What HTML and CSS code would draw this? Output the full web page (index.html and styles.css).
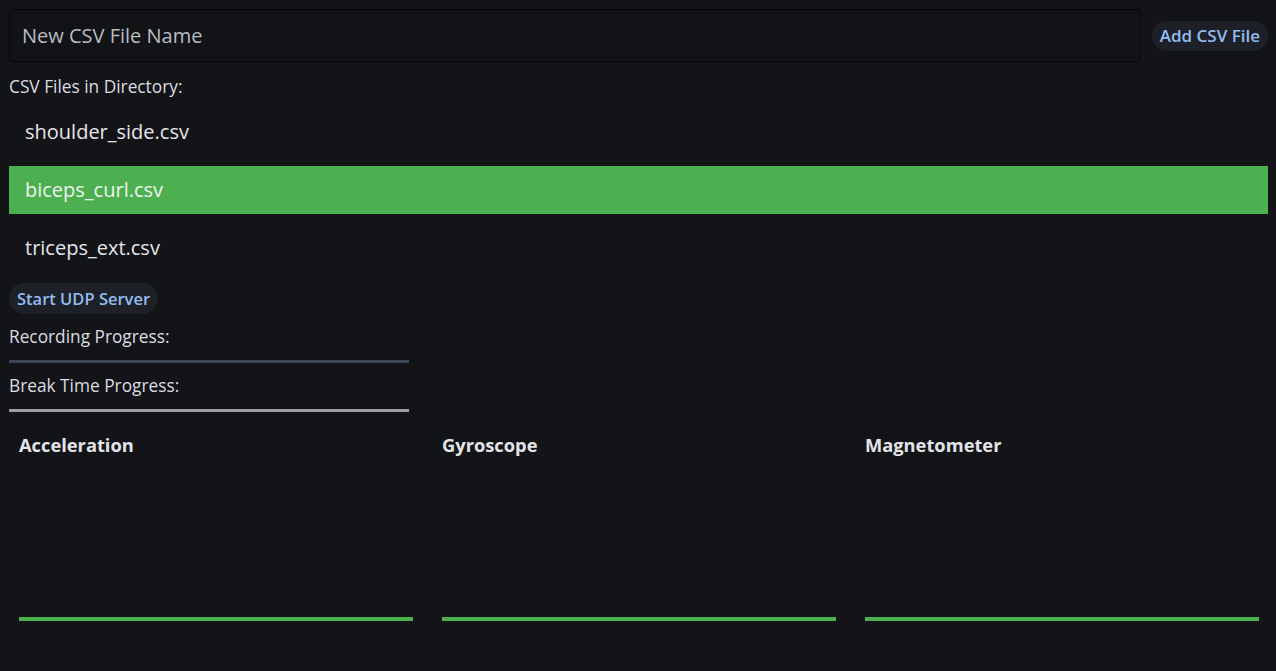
FILE: index.html
```html
<!DOCTYPE html>
<html>
<head>
<meta charset="utf-8">
<link rel="stylesheet" href="styles.css">
</head>
<body>
<div class="app">
  <div class="top-row">
    <div class="name-input">New CSV File Name</div>
    <button class="pill-btn">Add CSV File</button>
  </div>
  <div class="label dir-label">CSV Files in Directory:</div>
  <ul class="file-list">
    <li class="file-item">shoulder_side.csv</li>
    <li class="file-item selected">biceps_curl.csv</li>
    <li class="file-item">triceps_ext.csv</li>
  </ul>
  <div class="btn-row">
    <button class="pill-btn small">Start UDP Server</button>
  </div>
  <div class="label prog-label">Recording Progress:</div>
  <div class="bar rec-bar"></div>
  <div class="label prog-label">Break Time Progress:</div>
  <div class="bar break-bar"></div>
  <div class="charts">
    <div class="chart">
      <div class="chart-title">Acceleration</div>
      <div class="chart-area"></div>
      <div class="chart-line"></div>
    </div>
    <div class="chart">
      <div class="chart-title">Gyroscope</div>
      <div class="chart-area"></div>
      <div class="chart-line"></div>
    </div>
    <div class="chart">
      <div class="chart-title">Magnetometer</div>
      <div class="chart-area"></div>
      <div class="chart-line"></div>
    </div>
  </div>
</div>
</body>
</html>
```

FILE: styles.css
```css
html, body {
  margin: 0;
  padding: 0;
  background: #121418;
}
body {
  font-family: "Open Sans", "Noto Sans", sans-serif;
  color: #e2e2e6;
}
.app {
  padding: 9px 8px 0 9px;
  display: flex;
  flex-direction: column;
}
.top-row {
  display: flex;
  align-items: center;
  gap: 11px;
}
.name-input {
  flex: 1;
  height: 53px;
  box-sizing: border-box;
  border: 1px solid #05070a;
  border-radius: 4px;
  padding: 0 12px;
  display: flex;
  align-items: center;
  font-size: 20px;
  color: #b9bcc3;
  background: #111317;
}
.pill-btn {
  font-family: "Open Sans", "Noto Sans", sans-serif;
  background: #1d2026;
  color: #92bdf2;
  border: none;
  border-radius: 16px;
  font-size: 17px;
  font-weight: 600;
  height: 30px;
  padding: 0 8px;
}
.pill-btn.small {
  font-size: 16.5px;
  height: 31px;
  padding: 0 8px;
}
.label {
  font-size: 17.3px;
  color: #dcdde1;
}
.dir-label {
  margin-top: 14px;
  height: 22px;
  line-height: 22px;
}
.file-list {
  list-style: none;
  margin: 0;
  padding: 0;
  margin-top: 10px;
  display: flex;
  flex-direction: column;
  gap: 10px;
}
.file-item {
  height: 48px;
  line-height: 48px;
  padding-left: 16px;
  font-size: 20px;
  color: #e6e6ea;
}
.file-item.selected {
  background: #4caf50;
  color: #eef3ee;
}
.btn-row {
  margin-top: 11px;
  display: flex;
}
.prog-label {
  margin-top: 12px;
  height: 22px;
  line-height: 22px;
}
.bar {
  width: 400px;
  height: 3px;
  margin-top: 12px;
}
.rec-bar {
  background: #3c4757;
}
.break-bar {
  background: #9e9e9e;
}
.charts {
  display: grid;
  grid-template-columns: repeat(3, 394px);
  column-gap: 29px;
  padding-left: 10px;
  margin-top: 19px;
}
.chart {
  display: flex;
  flex-direction: column;
}
.chart-title {
  font-size: 18.3px;
  font-weight: 700;
  color: #e4e4e8;
  height: 28px;
  line-height: 28px;
}
.chart-area {
  height: 158px;
}
.chart-line {
  height: 4px;
  background: #4caf50;
}
```
